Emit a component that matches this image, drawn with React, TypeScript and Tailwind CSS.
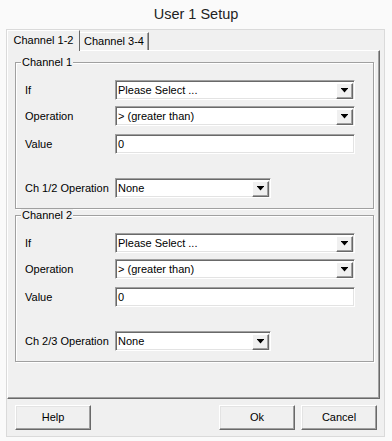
import React, { FC } from "react";

const Arrow: FC = () => (
  <svg width="7" height="5" viewBox="0 0 7 5" className="block">
    <path d="M0 0h7v1H0zM0.5 1h6L3.5 4.5z" fill="#000" />
  </svg>
);

interface ComboProps {
  value: string;
  wide?: boolean;
}

const Combo: FC<ComboProps> = ({ value, wide = true }) => (
  <div
    className={`flex h-[20px] items-center border-t border-l border-t-[#a0a0a0] border-l-[#a0a0a0] border-r border-b border-r-white border-b-white bg-white shadow-[inset_1px_1px_0_#696969,inset_-1px_-1px_0_#e3e3e3] ${
      wide ? "w-[240px]" : "w-[156px]"
    }`}
  >
    <span className="flex-1 truncate pl-[2px] pt-[1px]">{value}</span>
    <div className="mr-[1px] mt-[1px] flex h-[16px] w-[17px] items-center justify-center border-t border-l border-white border-r border-b border-r-[#696969] border-b-[#696969] bg-[#f0f0f0] shadow-[inset_-1px_-1px_0_#a0a0a0]">
      <Arrow />
    </div>
  </div>
);

const TextBox: FC<{ value: string }> = ({ value }) => (
  <div className="flex h-[20px] w-[240px] items-center border-t border-l border-t-[#a0a0a0] border-l-[#a0a0a0] border-r border-b border-r-white border-b-white bg-white pl-[2px] pt-[1px] shadow-[inset_1px_1px_0_#696969,inset_-1px_-1px_0_#e3e3e3]">
    {value}
  </div>
);

interface GroupProps {
  title: string;
  pairLabel: string;
  className?: string;
}

const ChannelGroup: FC<GroupProps> = ({ title, pairLabel, className = "" }) => (
  <div
    className={`relative h-[147px] w-[359px] border border-[#a0a0a0] pl-[9px] pt-[17px] shadow-[1px_1px_0_#fff,inset_1px_1px_0_#fff] ${className}`}
  >
    <span className="absolute left-[5px] top-[-7px] bg-[#f0f0f0] px-[1px] leading-[13px]">{title}</span>
    <div className="flex h-[20px] items-center">
      <span className="w-[90px]">If</span>
      <Combo value="Please Select ..." />
    </div>
    <div className="mt-[6px] flex h-[20px] items-center">
      <span className="w-[90px]">Operation</span>
      <Combo value="> (greater than)" />
    </div>
    <div className="mt-[8px] flex h-[20px] items-center">
      <span className="w-[90px]">Value</span>
      <TextBox value="0" />
    </div>
    <div className="mt-[24px] flex h-[20px] items-center">
      <span className="w-[90px]">{pairLabel}</span>
      <Combo value="None" wide={false} />
    </div>
  </div>
);

const DlgButton: FC<{ label: string; className?: string }> = ({ label, className = "" }) => (
  <button
    type="button"
    className={`flex h-[25px] w-[76px] items-center justify-center border-t border-l border-white border-r border-b border-r-[#696969] border-b-[#696969] bg-[#f0f0f0] shadow-[inset_-1px_-1px_0_#a0a0a0,inset_1px_1px_0_#e3e3e3] ${className}`}
  >
    {label}
  </button>
);

const App: FC = () => {
  return (
    <div className="h-[441px] w-[392px] overflow-hidden bg-[#fafafa] text-[11px] text-black [font-family:'Liberation_Sans',Arial,sans-serif]">
      <div className="flex h-[29px] items-center justify-center pt-[1px] text-[14.5px] text-[#222]">User 1 Setup</div>

      <div className="ml-[6px] flex h-[408px] w-[379px] flex-col border border-[#dadada] bg-[#f0f0f0]">
        {/* tabs */}
        <div className="flex h-[20px] items-end">
          <div className="relative z-10 mb-[-1px] flex h-[21px] w-[73px] items-center justify-center border-t border-l border-white border-r border-r-[#696969] bg-[#f0f0f0] pb-[1px]">
            Channel 1-2
          </div>
          <div className="flex h-[18px] w-[69px] items-center justify-center border-t border-white border-r border-r-[#696969] shadow-[inset_-1px_0_0_#a0a0a0]">
            Channel 3-4
          </div>
        </div>

        {/* tab page */}
        <div className="h-[349px] w-[373px] border-t border-l border-white border-r border-b border-r-[#696969] border-b-[#696969] pl-[7px] pt-[11px] shadow-[inset_-1px_-1px_0_#a0a0a0]">
          <ChannelGroup title="Channel 1" pairLabel="Ch 1/2 Operation" />
          <ChannelGroup title="Channel 2" pairLabel="Ch 2/3 Operation" className="mt-[6px]" />
        </div>

        {/* buttons */}
        <div className="mt-[6px] flex pl-[8px] pr-[7px]">
          <DlgButton label="Help" />
          <div className="flex-1" />
          <DlgButton label="Ok" />
          <DlgButton label="Cancel" className="ml-[6px]" />
        </div>
      </div>
    </div>
  );
};

export default App;
